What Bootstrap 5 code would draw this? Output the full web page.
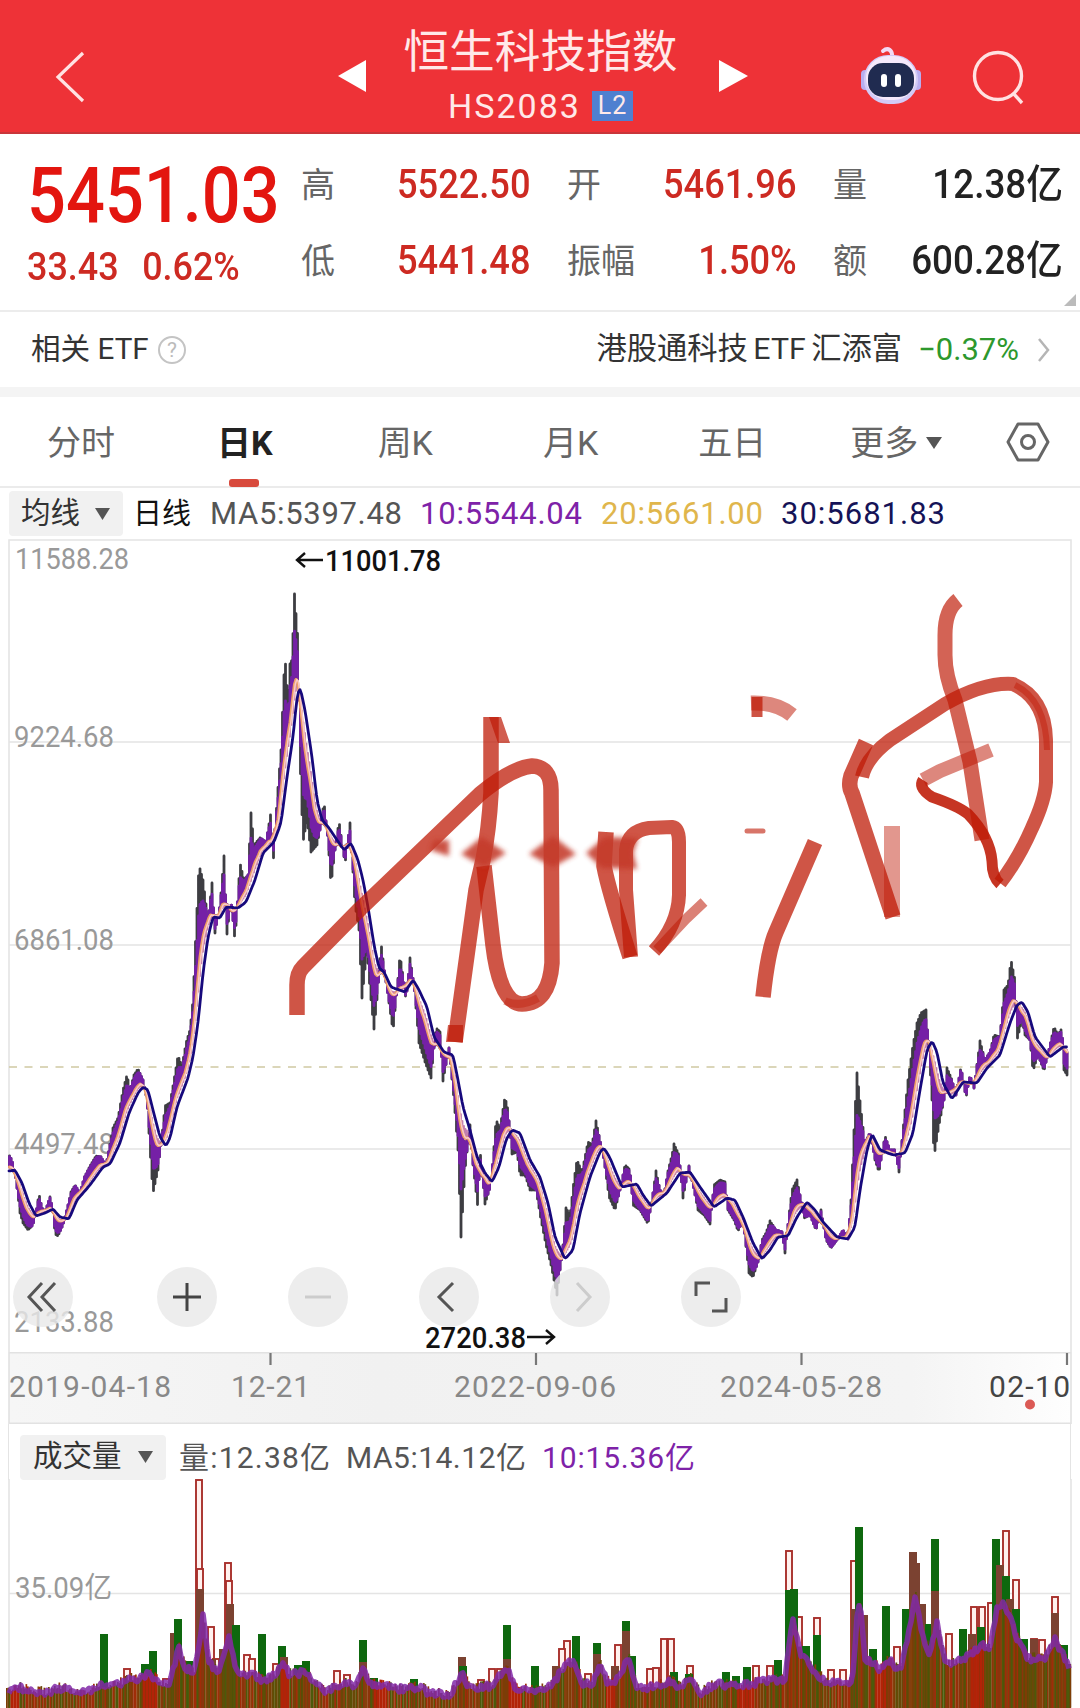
<!DOCTYPE html>
<html lang="zh-CN">

<head>
    <meta charset="UTF-8">
    <meta name="viewport" content="width=device-width, initial-scale=1.0">
    <title>恒生科技指数 HS2083</title>
    <link href="https://cdn.jsdelivr.net/npm/bootstrap@5.3.0/dist/css/bootstrap.min.css" rel="stylesheet">
    <style>
        body {
            width: 1080px;
            height: 1708px;
            overflow: hidden;
            background: #fff;
            color: #333;
            font-family: Roboto, "Noto Sans CJK SC", sans-serif;
            line-height: 1;
        }

        svg {
            display: block;
            flex: none;
            overflow: visible;
        }

        svg text {
            font-family: Roboto, "Noto Sans CJK SC", sans-serif;
        }

        .top-bar {
            height: 134px;
            background: #ee3237;
            border-bottom: 2px solid #c9363a;
            color: #ffe9e9;
            padding: 0 54px 0 54px;
        }

        .top-bar .back { width: 284px; }
        .top-bar .titles { width: 353px; padding-top: 28px; padding-right: 4px; }
        .index-name { font-size: 45.7px; line-height: 50px; }
        .index-code { font-size: 34px; letter-spacing: 2px; line-height: 36px; margin-top: 10px; }

        .level-tag {
            width: 41px;
            height: 30px;
            background: #4f80d0;
            font-size: 25px;
            line-height: 30px;
            letter-spacing: 1px;
            margin-left: 11px;
        }

        .quote {
            height: 178px;
            padding: 23px 17px 0 27px;
            border-bottom: 2px solid #ececec;
            position: relative;
        }

        .quote .last-col { width: 274px; }
        .up { color: #cd2a22; }
        .squeeze { display: inline-block; transform: scaleX(.92); white-space: nowrap; }
        .from-left { transform-origin: left; }
        .from-right { transform-origin: right; }
        .last-price { font-size: 77px; font-weight: 500; color: #e3150f; line-height: 78px; transform: scaleX(.89); }
        .change { font-size: 38px; font-weight: 500; line-height: 44px; margin-top: 10px; word-spacing: 3px; transform: scaleX(.945); }

        .stats {
            display: grid;
            grid-template-columns: 230px 36px 230px 36px 230px;
            grid-auto-rows: 40px;
            row-gap: 36px;
            font-size: 34px;
            line-height: 40px;
            color: #666;
            padding-top: 8px;
        }

        .stats .fig { font-size: 40px; font-weight: 500; transform: scaleX(.905); }
        .stats .plain { color: #222; transform: scaleX(.92); }
        .corner { position: absolute; right: 4px; bottom: 4px; }

        .etf-row { height: 75px; padding: 0 29px 0 31px; font-size: 29.6px; color: #333; }
        .etf-row .fund { font-size: 30.3px; word-spacing: -2px; }
        .etf-row .down { color: #2d982d; font-size: 31px; margin-left: 16px; }
        .band { height: 10px; background: #f4f4f4; }

        .periods { height: 91px; font-size: 34px; color: #666; border-bottom: 2px solid #ebebeb; }
        .periods a { color: inherit; text-decoration: none; height: 91px; position: relative; }
        .periods .on { color: #222; font-weight: 700; }
        .periods .on::after { content: ""; position: absolute; left: 12px; bottom: 1px; width: 30px; height: 8px; border-radius: 3px; background: #d84a3d; }

        .legend-row { height: 51px; padding-left: 9px; font-size: 31px; color: #555; }
        .picker { height: 45px; background: #f1f1f1; border-radius: 4px; color: #333; }

        .price-panel { height: 813px; position: relative; }
        .tools { position: absolute; left: 13px; top: 728px; width: 728px; }

        .tool {
            width: 60px;
            height: 60px;
            border-radius: 50%;
            background: rgba(233, 233, 233, .8);
        }

        .axis-panel { height: 72px; }
        .vol-legend { height: 56px; margin: 0 9px 0 8px; padding: 10px 0 0 11px; font-size: 29.5px; border: solid #e4e4e4; border-width: 0 1.6px; }
    </style>
</head>

<body>
    <header class="top-bar d-flex align-items-start">
        <div class="back pt-5">
            <svg width="32" height="56" viewBox="0 0 32 56" fill="none" stroke="#ffe2e2" stroke-width="3.2"><path d="M29 5 4 29 29 53" /></svg>
        </div>
        <svg width="28" height="32" viewBox="0 0 28 32" style="margin-top:60px"><path d="M0 16 28 0V32Z" fill="#fff" /></svg>
        <div class="titles d-flex flex-column align-items-center">
            <div class="index-name">恒生科技指数</div>
            <div class="index-code d-flex align-items-center">HS2083<span class="level-tag text-center">L2</span></div>
        </div>
        <svg width="29" height="32" viewBox="0 0 29 32" style="margin-top:60px"><path d="M29 16 0 0V32Z" fill="#fff" /></svg>
        <svg class="ms-auto" width="62" height="60" viewBox="0 0 62 60" style="margin-top:46px">
            <path d="M32 12C33 4 28 1 23 5" fill="none" stroke="#f3d9f4" stroke-width="4" stroke-linecap="round" />
            <rect x="1" y="24" width="8" height="20" rx="4" fill="#b9aef0" />
            <rect x="53" y="24" width="8" height="20" rx="4" fill="#b9aef0" />
            <rect x="4" y="9" width="54" height="49" rx="24" fill="#d3cbf7" />
            <rect x="6" y="10" width="50" height="44" rx="22" fill="#f5e9fb" />
            <rect x="8" y="17" width="46" height="34" rx="15" fill="#202b50" />
            <rect x="21" y="28" width="6" height="13" rx="3" fill="#fff" />
            <rect x="35" y="28" width="6" height="13" rx="3" fill="#fff" />
        </svg>
        <svg width="54" height="54" viewBox="0 0 54 54" fill="none" stroke="#ffe2e2" stroke-width="3.4" style="margin:50px 0 0 50px">
            <circle cx="26" cy="26" r="23.5" /><path d="M41 43 50 53" />
        </svg>
    </header>

    <section class="quote d-flex">
        <div class="last-col">
            <div class="last-price squeeze from-left">5451.03</div>
            <div class="change up squeeze from-left">33.43&nbsp; 0.62%</div>
        </div>
        <div class="stats">
            <div class="d-flex justify-content-between"><span>高</span><span class="fig up squeeze from-right">5522.50</span></div><i></i>
            <div class="d-flex justify-content-between"><span>开</span><span class="fig up squeeze from-right">5461.96</span></div><i></i>
            <div class="d-flex justify-content-between"><span>量</span><span class="fig plain squeeze from-right">12.38亿</span></div>
            <div class="d-flex justify-content-between"><span>低</span><span class="fig up squeeze from-right">5441.48</span></div><i></i>
            <div class="d-flex justify-content-between"><span>振幅</span><span class="fig up squeeze from-right">1.50%</span></div><i></i>
            <div class="d-flex justify-content-between"><span>额</span><span class="fig plain squeeze from-right">600.28亿</span></div>
        </div>
        <svg class="corner" width="12" height="12" viewBox="0 0 12 12"><path d="M12 0V12H0Z" fill="#bbb" /></svg>
    </section>

    <section class="etf-row d-flex align-items-center">
        <span>相关 ETF</span>
        <svg class="ms-2" width="30" height="30" viewBox="0 0 30 30">
            <circle cx="15" cy="15" r="13" fill="none" stroke="#c4c4c4" stroke-width="2" />
            <text x="15" y="22" font-size="21" fill="#bbb" text-anchor="middle">?</text>
        </svg>
        <span class="fund ms-auto">港股通科技 ETF 汇添富</span>
        <span class="down">−0.37%</span>
        <svg style="margin-left:17px" width="15" height="28" viewBox="0 0 15 28" fill="none" stroke="#b5b5b5" stroke-width="2.5"><path d="M3 3 12 14 3 25" /></svg>
    </section>
    <div class="band"></div>

    <nav class="periods d-flex">
        <a class="d-flex align-items-center" href="#" style="margin-left:47px">分时</a>
        <a class="on d-flex align-items-center" href="#" style="margin-left:102px">日K</a>
        <a class="d-flex align-items-center" href="#" style="margin-left:105px">周K</a>
        <a class="d-flex align-items-center" href="#" style="margin-left:110px">月K</a>
        <a class="d-flex align-items-center" href="#" style="margin-left:100px">五日</a>
        <a class="d-flex align-items-center" href="#" style="margin-left:84px">更多
            <svg class="ms-2" width="16" height="12" viewBox="0 0 16 12"><path d="M0 0H16L8 12Z" fill="#555" /></svg>
        </a>
        <svg style="margin:24px 0 0 64px" width="44" height="42" viewBox="0 0 44 42" fill="none" stroke="#666" stroke-width="3">
            <path d="M12 3H32L42 21 32 39H12L2 21Z" stroke-linejoin="round" /><circle cx="22" cy="21" r="6.5" />
        </svg>
    </nav>

    <div class="legend-row d-flex align-items-center">
        <div class="picker d-flex align-items-center" style="width:114px;padding-left:12px;font-size:29.5px">均线
            <svg style="margin-left:15px" width="15" height="12" viewBox="0 0 15 12"><path d="M0 0H15L7.5 12Z" fill="#555" /></svg>
        </div>
        <svg width="940" height="45" viewBox="0 0 940 45" font-size="31">
            <text x="10" y="33" font-size="29" fill="#111" textLength="58">日线</text>
            <text x="87" y="33" fill="#555" textLength="192">MA5:5397.48</text>
            <text x="297" y="33" fill="#7e22a8" textLength="162">10:5544.04</text>
            <text x="478" y="33" fill="#e0b64c" textLength="162">20:5661.00</text>
            <text x="658" y="33" fill="#151357" textLength="164">30:5681.83</text>
        </svg>
    </div>

    <section class="price-panel">
        <svg width="1080" height="813" viewBox="0 539 1080 813">
            <g stroke="#e4e4e4" stroke-width="1.6" fill="none">
                <path d="M9 1352V540H1071V1352M9 742H1071M9 945H1071M9 1149H1071" />
            </g>
            <path d="M9 1067H1071" stroke="#cfc9a3" stroke-width="1.6" stroke-dasharray="8 7.5" />
            <g font-size="29" fill="#999" stroke="none">
                <text x="15" y="569" textLength="114" lengthAdjust="spacingAndGlyphs">11588.28</text>
                <text x="14" y="747" textLength="100" lengthAdjust="spacingAndGlyphs">9224.68</text>
                <text x="14" y="950" textLength="100" lengthAdjust="spacingAndGlyphs">6861.08</text>
                <text x="14" y="1154" textLength="100" lengthAdjust="spacingAndGlyphs">4497.48</text>
                <text x="14" y="1332" textLength="100" lengthAdjust="spacingAndGlyphs">2133.88</text>
            </g>
            <g id="candles"></g>
            <g font-size="29" font-weight="500" fill="#111">
                <text x="325" y="571" textLength="116" lengthAdjust="spacingAndGlyphs">11001.78</text>
                <text x="425" y="1348" textLength="101" lengthAdjust="spacingAndGlyphs">2720.38</text>
            </g>
            <path d="M323 560H297M305 553 297 560 305 567M527 1337H554M546 1330 554 1337 546 1344" fill="none" stroke="#111" stroke-width="2.4" />

            <!-- marker-pen doodle, separate strokes so overlaps go darker -->
            <defs>
                <filter id="soft" x="-30%" y="-60%" width="160%" height="220%"><feGaussianBlur stdDeviation="2.6" /></filter>
            </defs>
            <g fill="none" stroke="#be1905" stroke-opacity=".74" stroke-width="15.5" stroke-linejoin="round">
                <path d="M297 1015V985Q297 973 303 967L360 909 430 842 480 794Q512 768 532 766Q551 767 551 790L552 963Q549 1004 522 1004Q500 1004 493 945L484 866" />
                <path d="M491 717V793Q489 830 483 860L476 890 455 1042" />
                <path d="M606 832 604 866Q608 888 630 957" />
                <path d="M631 957 626 890V850Q628 831 649 828L672 827Q679 828 679 842V895Q678 925 654 951" stroke-width="14" />
                <path d="M815 842 776 932Q768 950 763 997" />
                <path d="M866 742 851 776Q848 786 852 793L893 917" />
                <path d="M862 777Q866 758 890 740L945 704Q984 682 1013 684Q1045 698 1046 740V782Q1045 800 1032 828Q1018 860 1000 883" stroke-width="14" />
                <path d="M958 600Q945 610 945 635V655Q945 675 955 700L970 762 982 840" stroke-width="15" stroke-opacity=".68" />
            </g>
            <g fill="none" stroke="#be1905" stroke-linejoin="round">
                <path d="M1000 884Q992 877 992 861Q990 837 968 814Q958 806 932 797Q918 788 923 780" stroke-width="11" stroke-opacity=".88" />
                <path d="M923 780 940 771 991 750" stroke-width="14" stroke-opacity=".52" />
                <path d="M704 902 686 919 657 950" stroke-width="10" stroke-opacity=".55" />
                <path d="M892 826V917" stroke-width="16" stroke-opacity=".45" />
                <path d="M751 703Q776 702 792 715" stroke-width="15" stroke-opacity=".52" />
                <path d="M757 697V717" stroke-width="11" stroke-opacity=".75" />
                <path d="M747 831H763" stroke-width="5" stroke-opacity=".6" stroke-linecap="round" />
                <path d="M1015 685Q1046 700 1047 750" stroke-width="6" stroke-opacity=".45" />
                <path d="M505 1001Q520 1008 538 998" stroke-width="8" stroke-opacity=".4" />
            </g>
            <path d="M489 717H501L510 743H498ZM448 1025H463V1042H446Z" fill="#be1905" fill-opacity=".7" />
            <g fill="#c43b2b" filter="url(#soft)" opacity=".88">
                <path d="M434 840H449V856L430 850ZM461 854 482 837 506 853 484 867ZM529 854 553 836 576 854 553 867ZM586 853 605 837 638 838 633 853 637 869 602 868Z" />
            </g>
            <path d="M503 855H530M576 855H590" stroke="#d99" stroke-width="4" opacity=".35" filter="url(#soft)" />
        </svg>
        <div class="tools d-flex">
            <div class="tool d-flex align-items-center justify-content-center" style="margin-right:84px">
                <svg width="34" height="34" viewBox="0 0 34 34" fill="none" stroke="#555" stroke-width="3"><path d="M16 3 3 17 16 31M29 3 16 17 29 31" /></svg>
            </div>
            <div class="tool d-flex align-items-center justify-content-center" style="margin-right:71px">
                <svg width="30" height="30" viewBox="0 0 30 30" stroke="#444" stroke-width="3"><path d="M15 1V29M1 15H29" /></svg>
            </div>
            <div class="tool d-flex align-items-center justify-content-center" style="margin-right:71px">
                <svg width="28" height="28" viewBox="0 0 28 28" stroke="#ccc" stroke-width="3"><path d="M1 14H27" /></svg>
            </div>
            <div class="tool d-flex align-items-center justify-content-center" style="margin-right:71px">
                <svg width="34" height="34" viewBox="0 0 34 34" fill="none" stroke="#555" stroke-width="3"><path d="M21 3 7 17 21 31" /></svg>
            </div>
            <div class="tool d-flex align-items-center justify-content-center" style="margin-right:71px">
                <svg width="34" height="34" viewBox="0 0 34 34" fill="none" stroke="#ccc" stroke-width="3"><path d="M14 3 27 17 14 31" /></svg>
            </div>
            <div class="tool d-flex align-items-center justify-content-center">
                <svg width="34" height="34" viewBox="0 0 34 34" fill="none" stroke="#555" stroke-width="3"><path d="M2 16V3H16M32 18V31H18" /></svg>
            </div>
        </div>
    </section>

    <section class="axis-panel">
        <svg width="1080" height="72" viewBox="0 1352 1080 72">
            <defs>
                <linearGradient id="shade"><stop offset="0" stop-color="#f6f6f6" /><stop offset=".35" stop-color="#f1f1f1" /><stop offset=".85" stop-color="#f4f4f4" /><stop offset="1" stop-color="#fefefe" /></linearGradient>
            </defs>
            <rect x="9" y="1352" width="1062" height="72" fill="url(#shade)" />
            <path d="M9 1352.8H1071M9 1423.2H1071M9 1352V1424M1071 1352V1424" stroke="#e2e2e2" stroke-width="1.6" />
            <path d="M270.5 1353V1365M536 1353V1365M801.500 1353V1365M1067 1353V1365" stroke="#777" stroke-width="2.2" />
            <g font-size="30" fill="#888">
                <text x="9" y="1397" textLength="162">2019-04-18</text>
                <text x="231" y="1397" textLength="79">12-21</text>
                <text x="454" y="1397" textLength="162">2022-09-06</text>
                <text x="720" y="1397" textLength="162">2024-05-28</text>
                <text x="989" y="1397" textLength="81" fill="#444">02-10</text>
            </g>
            <circle cx="1030" cy="1404.500" r="5" fill="#db5a55" />
        </svg>
    </section>

    <div class="vol-legend d-flex align-items-center">
        <div class="picker d-flex align-items-center" style="width:146px;padding-left:13px">成交量
            <svg style="margin-left:16px" width="15" height="12" viewBox="0 0 15 12"><path d="M0 0H15L7.5 12Z" fill="#555" /></svg>
        </div>
        <svg width="700" height="45" viewBox="0 0 700 45" font-size="30">
            <text x="13" y="33" fill="#555" textLength="151">量:12.38亿</text>
            <text x="180" y="33" fill="#555" textLength="180">MA5:14.12亿</text>
            <text x="376" y="33" fill="#7e22a8" textLength="153">10:15.36亿</text>
        </svg>
    </div>

    <svg width="1080" height="227" viewBox="0 1481 1080 227">
        <path d="M9 1480V1708M1071 1480V1708M9 1594.500H1071" stroke="#e4e4e4" stroke-width="1.6" />
        <text x="15" y="1599" font-size="29" fill="#999" textLength="97" lengthAdjust="spacingAndGlyphs">35.09亿</text>
        <g id="volume"></g>
    </svg>

    <script src="https://cdn.jsdelivr.net/npm/bootstrap@5.3.0/dist/js/bootstrap.bundle.min.js"></script>
    <script>
        // 30-day average, x/y pairs
        const ma30 = [9,1171,15,1170,22,1183,29,1203,36,1216,45,1213,53,1209,60,1217,69,1219,77,1200,90,1185,103,1167,110,1164,120,1143,129,1113,138,1093,143,1087,148,1090,153,1110,160,1137,166,1146,170,1138,177,1107,188,1078,193,1057,198,1023,203,973,208,937,213,917,220,918,226,907,238,908,246,902,255,880,263,853,274,842,281,823,287,777,293,737,297,697,300,687,305,710,312,757,317,800,322,820,329,828,337,840,344,850,351,843,358,860,363,880,368,907,374,945,379,968,384,972,391,987,405,992,413,980,418,988,427,1007,434,1037,444,1052,453,1055,458,1080,463,1107,470,1130,477,1157,485,1173,492,1182,499,1167,506,1140,512,1130,520,1133,530,1160,540,1177,548,1203,555,1237,565,1259,573,1250,580,1213,590,1177,600,1152,604,1148,610,1158,622,1187,637,1184,643,1195,651,1206,667,1193,680,1173,690,1172,700,1187,714,1207,727,1198,735,1200,743,1217,753,1243,762,1259,770,1250,778,1237,788,1236,797,1217,807,1202,815,1210,823,1222,837,1237,848,1239,855,1227,860,1190,867,1150,872,1134,880,1150,893,1155,905,1153,913,1133,920,1090,927,1050,932,1041,937,1052,943,1083,952,1099,963,1082,977,1083,987,1068,1000,1055,1010,1023,1017,1005,1022,1002,1028,1012,1035,1037,1050,1057,1063,1047,1067,1047];
        // price extremes, x/y pairs
        const price = [9,1155,12,1160,16,1180,20,1213,23,1223,28,1230,33,1225,36,1212,39,1194,42,1208,45,1212,50,1197,53,1210,55,1234,58,1236,63,1225,68,1205,71,1192,75,1185,80,1193,84,1178,90,1166,96,1156,101,1157,106,1165,113,1128,118,1118,123,1090,127,1075,130,1090,134,1075,138,1069,143,1080,147,1100,150,1150,153,1193,158,1170,162,1135,165,1106,170,1103,174,1080,178,1056,182,1066,186,1043,190,1030,193,1000,196,930,199,865,203,880,208,920,212,883,215,933,220,905,224,856,227,934,231,900,235,941,240,863,244,880,248,875,251,813,254,845,260,838,266,842,271,812,273,866,277,800,281,750,284,675,285,657,288,700,290,664,292,660,294.5,594,298,640,300,760,303,842,307,820,311,852,317,845,320,830,324,802,328,840,331,885,335,850,339,821,345,864,350,823,355,905,359,930,362,998,367,950,370,990,374,1029,378,990,381,943,385,975,390,1010,393,1031,397,990,400,955,405,990,406,1002,410,958,414,985,419,1043,425,1062,431,1078,436,1028,440,1032,443,1081,449,1048,454,1100,458,1150,461,1237,465,1170,470,1125,473,1165,478,1209,480,1150,485,1204,490,1188,493,1160,496,1120,500,1128,505,1097,508,1110,512,1154,517,1152,520,1175,525,1175,530,1190,536,1190,541,1220,546,1245,551,1265,557,1295,560,1270,563,1245,566,1208,570,1215,574,1180,577,1160,582,1172,588,1142,592,1145,596,1121,600,1140,604,1160,609,1197,615,1210,620,1190,625,1165,630,1170,633,1205,640,1210,648,1224,652,1200,656,1171,660,1190,664,1195,668,1171,672,1155,674,1144,679,1155,683,1198,689,1166,694,1190,698,1210,704,1215,710,1224,714,1185,720,1180,725,1182,728,1210,734,1220,738,1231,743,1220,749,1273,753,1277,758,1262,762,1240,766,1233,770,1221,776,1230,782,1232,785,1253,789,1215,792,1190,797,1180,801,1200,804,1218,810,1215,816,1230,821,1210,826,1240,831,1248,837,1240,843,1230,848,1239,851,1200,854,1130,857,1073,861,1110,865,1145,870,1132,875,1160,879,1172,885,1136,890,1150,895,1150,899,1172,903,1130,908,1080,913,1045,917,1023,921,1013,926,1010,929,1050,932,1100,934,1157,939,1125,944,1100,947,1068,952,1080,956,1095,961,1067,966,1098,970,1075,974,1088,980,1041,985,1060,990,1052,994,1035,1000,1037,1004,990,1008,985,1011,960,1015,980,1017,1040,1022,1020,1025,1035,1030,1040,1033,1071,1038,1055,1044,1071,1050,1045,1054,1027,1058,1035,1062,1028,1064,1070,1067,1075];

        function at(list, x) {
            if (x <= list[0]) return list[1];
            for (let i = 2; i < list.length; i += 2) {
                if (x <= list[i]) {
                    const t = (x - list[i - 2]) / (list[i] - list[i - 2]);
                    return list[i - 1] + t * (list[i + 1] - list[i - 1]);
                }
            }
            return list[list.length - 1];
        }

        function smooth(list, shift, win) {
            let d = '';
            for (let x = 9; x <= 1067; x += 1.5) {
                let sum = 0;
                for (let k = -win; k <= win; k++) sum += at(list, x + shift + k);
                d += (d ? 'L' : 'M') + x + ' ' + (sum / (2 * win + 1)).toFixed(1);
            }
            return d;
        }

        // average that runs ahead of ma30 and overshoots towards the price
        function mid(x) {
            let p = 0;
            for (let k = -4; k <= 4; k++) p += at(price, x + k - 1);
            return at(ma30, x + 3) * .7 + p / 9 * .3;
        }

        let grey = '', purple = '', wine = '', pink = '', ma20 = '';
        for (let x = 9.5; x <= 1067; x += 1.5) {
            const p = at(price, x), m = mid(x), n = at(ma30, x);
            const gap = m - p;
            const cut = Math.sign(gap) * Math.max(0, Math.abs(gap) - 9) * .5;
            grey += `M${x} ${p.toFixed(1)}V${m.toFixed(1)}`;
            purple += `M${x} ${(p + cut).toFixed(1)}V${m.toFixed(1)}`;
            if (Math.round(x) % 3 === 0) wine += `M${x} ${(p + gap * .55).toFixed(1)}V${m.toFixed(1)}`;
            pink += `M${x} ${m.toFixed(1)}V${(m * .5 + n * .5).toFixed(1)}`;
            ma20 += (ma20 ? 'L' : 'M') + x + ' ' + (m * .85 + n * .15).toFixed(1);
        }
        document.getElementById('candles').innerHTML = `
            <g fill="none" stroke-linejoin="round" stroke-linecap="round">
                <path d="${pink}" stroke="#c37fb0" stroke-width="1.8"/>
                <path d="${grey}" stroke="#3d3d42" stroke-width="2.8"/>
                <path d="${purple}" stroke="#7520a6" stroke-width="2.8"/>
                <path d="${wine}" stroke="#82284f" stroke-width="1.6"/>
                <path d="${ma20}" stroke="#ee9f66" stroke-width="3"/>
                <path d="${ma20}" stroke="#f9c9cb" stroke-width="1.5" transform="translate(.8 0)"/>
                <path d="${smooth(ma30, 0, 1)}" stroke="#17097c" stroke-width="2.8"/>
            </g>`;

        // volume average, x/y pairs
        const volMa = [6,1692,20,1689,45,1694,60,1689,80,1695,100,1687,115,1687,130,1679,140,1680,150,1674,160,1686,168,1686,175,1665,178,1645,185,1668,193,1673,198,1655,203,1617,208,1660,218,1677,225,1650,229,1635,235,1665,240,1678,250,1675,265,1682,275,1675,283,1665,290,1676,305,1673,315,1685,325,1693,345,1684,355,1686,363,1670,370,1685,400,1690,420,1688,430,1695,450,1695,462,1675,470,1690,490,1687,507,1670,515,1688,530,1692,545,1690,556,1680,567,1663,575,1665,583,1685,592,1685,600,1665,607,1683,620,1680,628,1656,636,1687,645,1690,670,1682,680,1688,690,1680,700,1694,715,1685,740,1687,760,1683,785,1680,788,1650,793,1622,800,1655,815,1672,822,1680,835,1685,852,1683,857,1620,860,1600,865,1660,880,1670,888,1660,900,1672,908,1640,915,1595,922,1635,930,1655,937,1625,945,1665,955,1665,970,1655,983,1645,990,1650,997,1610,1003,1605,1010,1615,1015,1635,1028,1660,1045,1658,1055,1640,1065,1660,1070,1668];
        const hollow = [[199,1481],[228,1564],[211,1628],[247,1656],[252,1660],[216,1660],[127,1670],[166,1680],[337,1672],[347,1676],[276,1665],[492,1670],[500,1670],[481,1681],[567,1642],[562,1650],[588,1675],[618,1646],[650,1670],[656,1669],[664,1640],[671,1640],[690,1667],[756,1667],[770,1667],[789,1552],[799,1618],[817,1619],[831,1671],[843,1671],[897,1648],[854,1562],[949,1635],[974,1608],[982,1608],[991,1604],[1006,1532],[1016,1581],[1034,1640],[1042,1641],[1055,1598],[200,1570],[229,1582]];
        const solid = [[104,1635,'g'],[174,1634,'b'],[178,1620,'g'],[153,1652,'g'],[145,1665,'g'],[200,1590,'b'],[189,1662,'g'],[212,1660,'b'],[223,1650,'b'],[230,1605,'b'],[236,1626,'g'],[262,1635,'g'],[282,1647,'g'],[284,1658,'b'],[298,1666,'g'],[306,1662,'g'],[363,1641,'g'],[363,1663,'b'],[374,1679,'g'],[414,1680,'g'],[462,1658,'b'],[463,1667,'g'],[507,1626,'g'],[507,1660,'b'],[535,1667,'g'],[556,1667,'b'],[576,1637,'g'],[597,1644,'g'],[597,1655,'b'],[615,1667,'b'],[626,1622,'g'],[626,1632,'b'],[632,1657,'g'],[689,1675,'g'],[674,1673,'g'],[726,1673,'g'],[736,1677,'g'],[747,1668,'g'],[778,1661,'g'],[789,1591,'g'],[794,1590,'g'],[806,1647,'g'],[817,1636,'g'],[855,1610,'b'],[859,1528,'g'],[864,1616,'b'],[873,1650,'g'],[886,1607,'g'],[906,1610,'g'],[913,1553,'b'],[916,1564,'b'],[922,1605,'b'],[929,1625,'g'],[935,1540,'g'],[935,1592,'b'],[963,1630,'g'],[972,1635,'b'],[981,1628,'g'],[996,1540,'g'],[1000,1566,'b'],[1006,1577,'g'],[1010,1600,'b'],[1016,1610,'g'],[1024,1640,'g'],[1034,1640,'b'],[1055,1614,'b'],[1064,1646,'g'],[1067,1665,'g']];

        let out = '';
        hollow.forEach(([x, y]) => {
            out += `<rect x="${x - 3}" y="${y}" width="6" height="${1710 - y}" fill="#fff1ee" stroke="#a8302b" stroke-width="1.9"/>`;
        });
        solid.forEach(([x, y, kind]) => {
            out += `<rect x="${x - 4}" y="${y}" width="8" height="${1710 - y}" fill="${kind === 'g' ? '#0e680e' : '#7b4231'}"/>`;
        });
        // packed daily bars under the average
        const tones = ['#7d3d05', '#5b5006', '#a02c08', '#86400b', '#4c5a0b', '#8c340a', '#6b4707'];
        let seed = 7;
        for (let x = 6; x < 1071; x += 1.5) {
            seed = (seed * 137 + 71) % 1009;
            const y = at(volMa, x) - 6 + seed % 9;
            const zone = Math.sin(x / 19) + Math.sin(x / 7.3);
            const c = zone > 1.4 ? '#b22307' : tones[seed % 7];
            out += `<rect x="${x}" y="${y.toFixed(1)}" width="1.7" height="${(1710 - y).toFixed(1)}" fill="${c}"/>`;
        }
        let d = '';
        seed = 3;
        for (let x = 9; x <= 1069; x += 2) {
            seed = (seed * 137 + 71) % 1009;
            d += (d ? 'L' : 'M') + x + ' ' + (at(volMa, x) + seed % 7 - 3).toFixed(1);
        }
        out += `<path d="${d}" fill="none" stroke="#8129a8" stroke-width="5.5" stroke-linejoin="round" stroke-opacity=".85"/>`;
        document.getElementById('volume').innerHTML = out;
    </script>
</body>

</html>
